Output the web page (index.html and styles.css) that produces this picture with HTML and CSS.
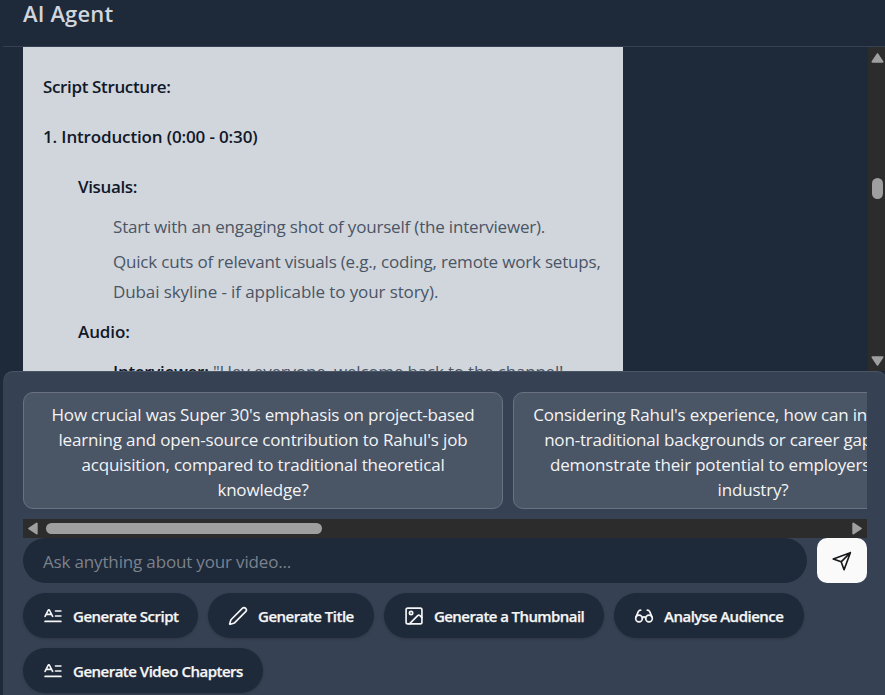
FILE: index.html
```html
<!DOCTYPE html>
<html lang="en">
<head>
<meta charset="utf-8">
<title>AI Agent</title>
<link rel="stylesheet" href="styles.css">
</head>
<body>
<svg class="sprite" aria-hidden="true">
  <symbol id="script" viewBox="0 0 24 24"><path d="M21.5 6H15M21.5 12H15M21.5 18.5H2.5M2.5 12.5 6.5 4.5h1l4 8M4.3 10h5.6"/></symbol>
</svg>
<div class="app">
  <header class="header"><h1><span class="t0">AI Agent</span></h1></header>
  <main class="chat">
    <article class="message">
      <h2><span class="t1">Script Structure:</span></h2>
      <h2><span class="t2">1. Introduction (0:00 - 0:30)</span></h2>
      <h3><span class="t3">Visuals:</span></h3>
      <p><span class="t4">Start with an engaging shot of yourself (the interviewer).</span></p>
      <p class="long"><span class="t5">Quick cuts of relevant visuals (e.g., coding, remote work setups,</span><br><span class="t6">Dubai skyline - if applicable to your story).</span></p>
      <h3 class="audio"><span class="t7">Audio:</span></h3>
      <p><strong class="t8">Interviewer:</strong> <span class="t9">"Hey everyone, welcome back to the channel!</span></p>
    </article>
    <div class="vbar">
      <svg width="13" height="10" viewBox="0 0 13 10"><path d="M6.5 1.2 11.5 8.7H1.5Z"/></svg>
      <i></i>
      <svg class="down" width="13" height="10" viewBox="0 0 13 10"><path d="M6.5 8.8 11.5 1.3H1.5Z"/></svg>
    </div>
  </main>
  <section class="composer">
    <div class="suggestions">
      <button class="card"><span class="q1">How crucial was Super 30's emphasis on project-based</span><span class="q2">learning and open-source contribution to Rahul's job</span><span class="q3">acquisition, compared to traditional theoretical</span><span class="q4">knowledge?</span></button>
      <button class="card"><span class="r1">Considering Rahul's experience, how can individuals with</span><span class="r2">non-traditional backgrounds or career gaps effectively</span><span class="r3">demonstrate their potential to employers in the tech</span><span class="r4">industry?</span></button>
    </div>
    <div class="hbar">
      <svg width="10" height="13" viewBox="0 0 10 13"><path d="M1.2 6.5 8.7 1.5V11.5Z"/></svg>
      <i></i>
      <svg class="right" width="10" height="13" viewBox="0 0 10 13"><path d="M8.8 6.5 1.3 1.5V11.5Z"/></svg>
    </div>
    <div class="ask">
      <div class="input"><span class="ph">Ask anything about your video...</span></div>
      <button class="send"><svg class="icon" viewBox="0 0 24 24"><path d="M22 2 14.5 22.5 11 13 1.5 9.5ZM22 2 11 13"/></svg></button>
    </div>
    <div class="actions">
      <button class="b1"><svg class="icon"><use href="#script"/></svg><span class="a1">Generate Script</span></button>
      <button class="b2"><svg class="icon" viewBox="0 0 24 24"><path d="M21.174 6.812a1 1 0 0 0-3.986-3.987L3.842 16.174a2 2 0 0 0-.5.83l-1.321 4.352a.5.5 0 0 0 .623.622l4.353-1.32a2 2 0 0 0 .83-.497z"/></svg><span class="a2">Generate Title</span></button>
      <button class="b3"><svg class="icon" viewBox="0 0 24 24"><rect x="2.5" y="2.5" width="19" height="19" rx="2"/><circle cx="8.5" cy="8.5" r="2"/><path d="m21.5 14-2.3-2.4a2 2 0 0 0-2.8 0L6.5 21.5"/></svg><span class="a3">Generate a Thumbnail</span></button>
      <button class="b4"><svg class="icon" viewBox="0 0 24 24"><circle cx="6" cy="15" r="4"/><circle cx="18" cy="15" r="4"/><path d="M14 15a2 2 0 0 0-2-2 2 2 0 0 0-2 2M2.5 13 5 7c.7-1.3 1.4-2 3-2M21.5 13 19 7c-.7-1.3-1.5-2-3-2"/></svg><span class="a4">Analyse Audience</span></button>
      <button class="b5"><svg class="icon"><use href="#script"/></svg><span class="a5">Generate Video Chapters</span></button>
    </div>
  </section>
</div>
</body>
</html>
```
FILE: styles.css
```css
* { box-sizing: border-box; }
body { margin: 0; background: #1e2939; font-family: "Open Sans", "Noto Sans", sans-serif; font-size: 17px; overflow: hidden; }
h1, h2, h3, p { margin: 0; white-space: nowrap; }
button { font: inherit; border: 0; padding: 0; }
.sprite { position: absolute; width: 0; height: 0; }
.app { width: 884px; height: 695px; margin-left: 3px; display: flex; flex-direction: column; }
.header { height: 47px; padding-left: 20px; border-bottom: 1px solid #364153; color: #d1d5dc; flex: none; }
.header h1 { font-size: 22px; line-height: 26px; font-weight: 600; }
.chat { height: 324px; flex: none; overflow: hidden; display: flex; justify-content: space-between; padding: 0 2px 0 20px; }
.message { width: 600px; height: 360px; padding: 20px 20px 0; background: #d1d5dc; color: #4a5565; }
.message h2, .message h3 { font-size: 17px; font-weight: 600; color: #101828; line-height: 40px; }
.message h2 { margin-bottom: 10px; }
.message h3 { padding-left: 35px; }
.message p { padding-left: 70px; line-height: 30px; margin: 5px 0; }
.message strong { font-weight: 600; color: #101828; }
.message .audio { line-height: 30px; margin: 10px 0; }
.vbar { width: 17px; height: 324px; background: #2c2c2c; display: flex; flex-direction: column; align-items: center; padding: 6px 0 5px 1px; }
.vbar svg, .hbar svg { fill: #9f9f9f; stroke: #9f9f9f; stroke-width: 2; stroke-linejoin: round; flex: none; }
.vbar i { width: 11px; height: 21px; border-radius: 6px; background: #9f9f9f; margin-top: 115px; }
.vbar .down { margin-top: auto; }
.composer { flex: 1; background: #364153; border-top: 1px solid #4a5565; border-radius: 10px 10px 0 0; padding: 20px 20px 0; }
.suggestions { width: 844px; height: 117px; display: flex; gap: 10px; overflow: hidden; }
.card { flex: none; width: 480px; height: 117px; border: 1px solid #6a7282; border-radius: 10px; background: #4a5565; color: #f3f4f6; line-height: 25px; display: flex; flex-direction: column; align-items: center; justify-content: center; white-space: nowrap; padding-top: 2px; }
.hbar { height: 19px; margin-top: 10px; background: #2c2c2c; display: flex; align-items: center; padding: 0 5px; }
.hbar i { width: 276px; height: 11px; border-radius: 6px; background: #9f9f9f; margin-left: 8px; }
.hbar .right { margin-left: auto; }
.ask { display: flex; gap: 10px; height: 45px; }
.input { width: 784px; border-radius: 23px; background: #1e2939; color: #7b828d; line-height: 48px; padding-left: 20px; white-space: nowrap; }
.send { width: 50px; border-radius: 10px; background: #fafafa; color: #18181b; display: grid; place-items: center; }
.icon { width: 20px; height: 20px; fill: none; stroke: currentColor; stroke-width: 2; stroke-linecap: round; stroke-linejoin: round; flex: none; }
.actions { display: flex; flex-wrap: wrap; gap: 10px; margin-top: 10px; }
.actions button { height: 45px; border-radius: 23px; background: #1e2939; color: #f5f5f5; font-size: 15px; font-weight: 600; letter-spacing: -.5px; -webkit-text-stroke: .25px #f5f5f5; display: flex; align-items: center; gap: 10px; padding-left: 20px; white-space: nowrap; box-shadow: 0 1px 3px #0003; line-height: 45px; }
.actions span { padding-top: 2px; }
.actions .a3 { letter-spacing: -.58px; }
.actions .b1 { width: 175px; }
.actions .b2 { width: 166px; }
.actions .b3 { width: 220px; }
.actions .b4 { width: 190px; }
.actions .b5 { width: 240px; }
.message span, .card span { letter-spacing: -.19px; }
.t0 { letter-spacing: .15px; }
.message .t1 { letter-spacing: -.36px; }
.message .t2 { letter-spacing: -.15px; }
.message .t3 { letter-spacing: -.36px; }
.message .t6 { letter-spacing: -.1px; }
.message .t7 { letter-spacing: -.1px; }
.message .t8 { letter-spacing: -.3px; }
.card .q2 { letter-spacing: -.15px; }
.ph { letter-spacing: -.16px; }
```
